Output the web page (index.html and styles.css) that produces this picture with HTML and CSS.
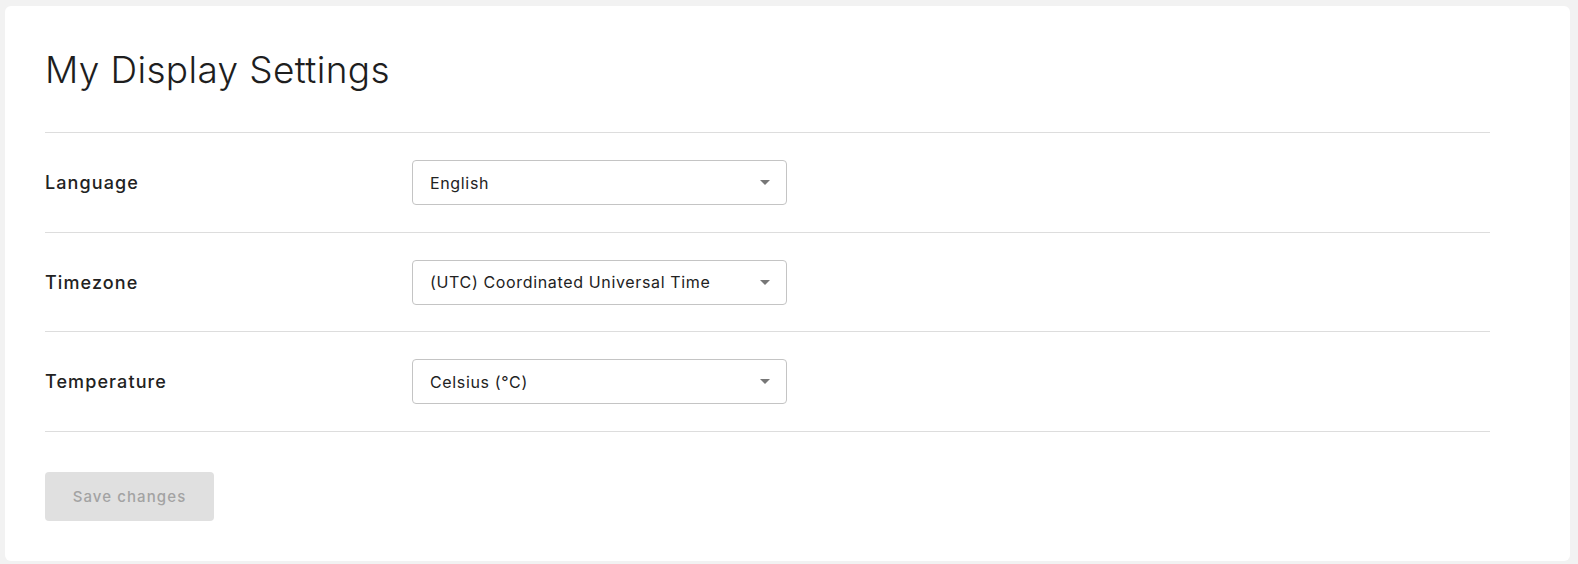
FILE: index.html
```html
<!DOCTYPE html>
<html>
<head>
    <title>My Display Settings</title>
    <meta charset="utf-8">
    <link rel="stylesheet" href="styles.css">
</head>
<body>
    <div class="card">
        <h1 class="title">My Display Settings</h1>
        <form class="settings">
            <div class="row">
                <label class="label">Language</label>
                <div class="select">
                    <span>English</span>
                    <span class="caret"></span>
                </div>
            </div>
            <div class="row">
                <label class="label">Timezone</label>
                <div class="select">
                    <span>(UTC) Coordinated Universal Time</span>
                    <span class="caret"></span>
                </div>
            </div>
            <div class="row">
                <label class="label">Temperature</label>
                <div class="select">
                    <span>Celsius (°C)</span>
                    <span class="caret"></span>
                </div>
            </div>
            <button type="button" class="save" disabled>Save changes</button>
        </form>
    </div>
</body>
</html>
```

FILE: styles.css
```css
html, body {
    margin: 0;
    background: #f2f2f2;
}
body {
    padding: 6px 8px 3px 5px;
    font-family: Inter, "Noto Sans", sans-serif;
    color: #222222;
}
.card {
    background: #ffffff;
    border-radius: 6px;
    padding: 0 80px 40px 40px;
    height: 555px;
    box-sizing: border-box;
}
.title {
    margin: 0;
    padding: 38px 0 36px;
    font-size: 37px;
    font-weight: 300;
    line-height: 52px;
    letter-spacing: 0.35px;
    color: #1e1e1e;
    border-bottom: 1px solid #dddddd;
}
.row {
    display: flex;
    align-items: center;
    height: 99px;
    border-bottom: 1px solid #dddddd;
}
.row:nth-child(2) {
    height: 98px;
}
.label {
    width: 367px;
    font-size: 18px;
    font-weight: 500;
    letter-spacing: 1.1px;
    color: #222222;
}
.select {
    display: flex;
    align-items: center;
    justify-content: space-between;
    box-sizing: border-box;
    width: 375px;
    height: 45px;
    padding: 0 16px 0 17px;
    border: 1px solid #c4c4c4;
    border-radius: 4px;
    font-size: 16px;
    letter-spacing: 0.65px;
    color: #222222;
}
.caret {
    width: 0;
    height: 0;
    border-left: 5px solid transparent;
    border-right: 5px solid transparent;
    border-top: 5px solid #777777;
}
.save {
    margin-top: 40px;
    width: 169px;
    height: 49px;
    border: none;
    border-radius: 4px;
    background: #e0e0e0;
    color: #a3a3a3;
    font-family: Inter, "Noto Sans", sans-serif;
    font-size: 15px;
    font-weight: 500;
    letter-spacing: 1.1px;
}
```
